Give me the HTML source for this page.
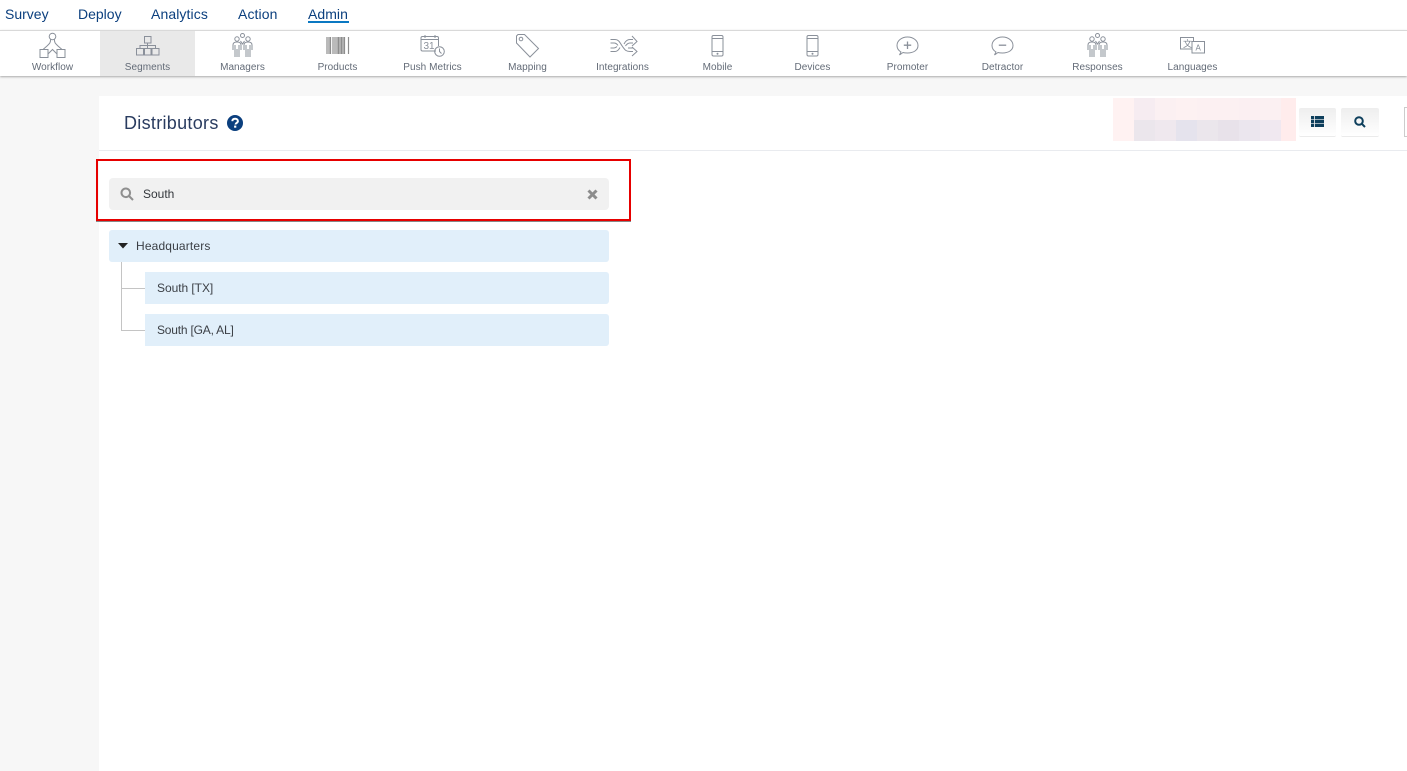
<!DOCTYPE html>
<html><head><meta charset="utf-8"><style>
html,body{margin:0;padding:0}
body{width:1407px;height:771px;position:relative;overflow:hidden;background:#f7f7f7;font-family:"Liberation Sans","Noto Sans CJK SC",sans-serif}
div,span,svg{position:absolute}
.top{top:6px;font-size:14px;line-height:16px;color:#0b3f7e;white-space:nowrap}
.lb{top:61px;width:95px;text-align:center;font-size:10px;line-height:12px;color:#636b77;white-space:nowrap;letter-spacing:.05px;padding-top:0.5px}
svg.i{top:31px;width:95px;height:30px;fill:none;stroke:#8a909a;stroke-width:1}
.t{font-size:12px;line-height:14px;color:#3b3f45;white-space:nowrap}
.b{background:#e1effa}
.c{top:98px;width:21px;height:21.5px}
.d{top:119.500px;width:21px;height:21.5px}
</style></head><body>
<div style="left:0;top:0;width:1407px;height:30px;background:#fff"></div>
<div class="top" style="left:5px">Survey</div>
<div class="top" style="left:78px">Deploy</div>
<div class="top" style="left:151px;letter-spacing:.1px">Analytics</div>
<div class="top" style="left:238px;letter-spacing:.1px">Action</div>
<div class="top" style="left:308px;letter-spacing:.05px">Admin</div>
<div style="left:308px;top:21px;width:41px;height:2px;background:#0a78c2"></div>
<div style="left:0;top:30px;width:1407px;height:46px;background:#fff;border-top:1px solid #d9d9d9;box-sizing:border-box;box-shadow:0 1px 2px #aaa"></div>
<div style="left:100px;top:31px;width:95px;height:45px;background:#e9e9e9"></div>

<svg class="i" style="left:5px" viewBox="0 0 95 30"><circle cx="47.500" cy="5.500" r="3.300"/><path d="M45.500 8.500C45.800 12 44 13 42 15L38 18.500M49.500 8.500C49.200 12 51 13 53 15L57 18.500M43 23L47.500 18.500 52 23"/><path d="M35 18.500H43V26.500H35ZM52 18.500H60V26.500H52Z"/></svg>
<svg class="i" style="left:100px" viewBox="0 0 95 30"><path d="M44.500 5.500H51V12H44.500ZM47.500 12V17M40 17V14.500H55.500V17M36.500 17.500H43.500V24H36.500ZM44.500 17.500H51V24H44.500ZM52 17.500H59V24H52Z"/></svg>
<svg class="i" style="left:195px" viewBox="0 0 95 30"><circle cx="47.500" cy="4.500" r="2"/><circle cx="42" cy="8" r="2.200"/><circle cx="53" cy="8" r="2.200"/><path d="M38 19V14C38 11.800 40 11 42 11S46 11.800 46 14V19M49 19V14C49 11.800 51 11 53 11S57 11.800 57 14V19M40 14V26M42 18V26M44 14V26M51 14V26M53 18V26M55 14V26M45.500 10L47.500 13 49.500 10"/></svg>
<svg class="i" style="left:290px;stroke:#8d8d8d" viewBox="0 0 95 30"><path stroke-width="1.200" d="M37 6V23M39 6V23M40.500 6V23M43 6V23M45 6V23M47 6V23M48.500 6V23M50 6V23M51.500 6V23M53 6V23M54.500 6V23M58.500 6V23"/></svg>
<svg class="i" style="left:385px" viewBox="0 0 95 30"><path d="M51 20H37.500C36.500 20 36 19.500 36 18.500V7C36 6 36.500 5.500 37.500 5.500H52C53 5.500 53.500 6 53.500 7V15M36 8.500H53.500M40 4V7M50 4V7"/><circle cx="54.500" cy="20.500" r="4.800"/><path d="M54.500 17.500V20.500L56.500 22.500"/><text x="38.500" y="18" font-size="10" font-family="Liberation Sans" fill="#8a909a" stroke="none">31</text></svg>
<svg class="i" style="left:480px" viewBox="0 0 95 30"><path d="M38 3.500H44.500L58.500 17.500 50 26 36.500 12 36.500 5Z"/><circle cx="41" cy="8" r="1.800"/></svg>
<svg class="i" style="left:575px" viewBox="0 0 95 30"><path d="M35.500 8.500H40C44 8.500 45 12 47.500 15.500S51 20.500 55 20.500H58M35.500 20.500H40C43 20.500 44 18 45 16.500M35.500 12H39C41 12 42 13 43 14.500M35.500 17H39C40 17 41 16.500 42 15.500M49 13C50 11 52 8.500 55 8.500H58M50.500 15C51.500 13.500 53 12 55 12H58M53 17H58M57 5L62 10.500 57 15M57 16L62 20.500 57 25"/></svg>
<svg class="i" style="left:670px" viewBox="0 0 95 30"><rect x="42" y="4.500" width="11" height="20.500" rx="1.500"/><path d="M42 7.500H53M42 20.500H53"/><circle cx="47.500" cy="22.700" r=".5"/></svg>
<svg class="i" style="left:765px" viewBox="0 0 95 30"><rect x="42" y="4.500" width="11" height="20.500" rx="1.500"/><path d="M42 7.500H53M42 20.500H53"/><circle cx="47.500" cy="22.700" r=".5"/></svg>
<svg class="i" style="left:860px" viewBox="0 0 95 30"><path d="M41 21C38.500 19.500 37 17 37 14.500C37 9.800 41.500 6 47.500 6S58 9.800 58 14.500 53.500 22 47.500 22C46 22 44.500 22 43 21.500L39.500 24Z"/><path stroke-width="1.300" d="M47.500 10.500V18M43.800 14.200H51.200"/></svg>
<svg class="i" style="left:955px" viewBox="0 0 95 30"><path d="M41 21C38.500 19.500 37 17 37 14.500C37 9.800 41.500 6 47.500 6S58 9.800 58 14.500 53.500 22 47.500 22C46 22 44.500 22 43 21.500L39.500 24Z"/><path stroke-width="1.300" d="M43.800 14.200H51.200"/></svg>
<svg class="i" style="left:1050px" viewBox="0 0 95 30"><circle cx="47.500" cy="4.500" r="2"/><circle cx="42" cy="8" r="2.200"/><circle cx="53" cy="8" r="2.200"/><path d="M38 19V14C38 11.800 40 11 42 11S46 11.800 46 14V19M49 19V14C49 11.800 51 11 53 11S57 11.800 57 14V19M40 14V26M42 18V26M44 14V26M51 14V26M53 18V26M55 14V26M45.500 10L47.500 13 49.500 10"/></svg>
<svg class="i" style="left:1145px" viewBox="0 0 95 30"><path d="M47 18H35.500V6.500H48.500V10.500M47 10.500H59.500V22H47Z"/><text x="38" y="16" font-size="9" fill="#7d8590" stroke="none" font-family="Noto Sans CJK SC">文</text><text x="50.500" y="19.500" font-size="8" fill="#7d8590" stroke="none" font-family="Liberation Sans">A</text></svg>

<div class="lb" style="left:5px">Workflow</div>
<div class="lb" style="left:100px">Segments</div>
<div class="lb" style="left:195px">Managers</div>
<div class="lb" style="left:290px">Products</div>
<div class="lb" style="left:385px">Push Metrics</div>
<div class="lb" style="left:480px">Mapping</div>
<div class="lb" style="left:575px">Integrations</div>
<div class="lb" style="left:670px">Mobile</div>
<div class="lb" style="left:765px">Devices</div>
<div class="lb" style="left:860px">Promoter</div>
<div class="lb" style="left:955px">Detractor</div>
<div class="lb" style="left:1050px">Responses</div>
<div class="lb" style="left:1145px">Languages</div>

<div style="left:99px;top:96px;width:1308px;height:675px;background:#fff"></div>
<div style="left:99px;top:150px;width:1308px;height:1px;background:#e9ebef"></div>
<div style="left:124px;top:112px;font-size:18px;line-height:22px;color:#2a3c60;letter-spacing:.3px;white-space:nowrap">Distributors</div>
<svg style="left:227px;top:115px" width="16" height="16" viewBox="0 0 16 16"><circle cx="8" cy="8" r="8" fill="#0b3f7e"/><path d="M5.300 6.200C5.400 4.600 6.600 3.800 8.100 3.800 9.700 3.800 10.900 4.700 10.900 6.100 10.900 8 8.500 7.900 8.500 9.500" fill="none" stroke="#fff" stroke-width="2"/><rect x="7.100" y="10.600" width="2.200" height="2.100" fill="#fff"/></svg>

<div style="left:1113px;top:98px;width:183px;height:43px;background:#fff2f2"></div>
<div class="c" style="left:1134px;background:#f6ecf1"></div>
<div class="c" style="left:1155px;background:#fbf0f2"></div>
<div class="c" style="left:1176px;background:#fdf1f2"></div>
<div class="c" style="left:1197px;background:#fcf0f2"></div>
<div class="c" style="left:1218px;background:#fcf0f2"></div>
<div class="c" style="left:1239px;background:#fbeff2"></div>
<div class="c" style="left:1260px;background:#fbf0f2"></div>
<div class="d" style="left:1134px;background:#ebe6ec"></div>
<div class="d" style="left:1155px;background:#efe8ee"></div>
<div class="d" style="left:1176px;background:#e5e3ed"></div>
<div class="d" style="left:1197px;background:#ebe6ec"></div>
<div class="d" style="left:1218px;background:#e8e2ea"></div>
<div class="d" style="left:1239px;background:#ebe6ee"></div>
<div class="d" style="left:1260px;background:#f0e8f0"></div>
<div style="left:1281px;top:98px;width:15px;height:43px;background:#ffecec"></div>

<div style="left:1299px;top:108px;width:37px;height:28px;background:linear-gradient(#eee,#fff);border-bottom:1px solid #ebebeb;border-radius:2px"></div>
<svg style="left:1311px;top:116px" width="13" height="11" viewBox="0 0 13 11" fill="#0e3f5c"><path d="M0 0H3V3.200H0ZM3.800 0H13V3.200H3.800ZM0 3.900H3V7.100H0ZM3.800 3.900H13V7.100H3.800ZM0 7.800H3V11H0ZM3.800 7.800H13V11H3.800Z"/></svg>
<div style="left:1341px;top:108px;width:38px;height:28px;background:linear-gradient(#eee,#fff);border-bottom:1px solid #ebebeb;border-radius:2px"></div>
<svg style="left:1354px;top:116px" width="12" height="12" viewBox="0 0 12 12" fill="none" stroke="#0e3f5c" stroke-width="2"><circle cx="5" cy="5" r="3.800"/><path d="M7.700 7.700L11 11"/></svg>
<div style="left:1404px;top:107px;width:3px;height:30px;box-sizing:border-box;border:1px solid #ccc;border-right:0"></div>

<div style="left:96px;top:159px;width:535px;height:62px;box-sizing:border-box;border:2px solid #e60000;box-shadow:0 1px 0 #888"></div>
<div style="left:109px;top:178px;width:500px;height:32px;background:#f1f1f1;border-radius:4px"></div>
<svg style="left:120px;top:187px" width="14" height="14" viewBox="0 0 14 14" fill="none" stroke="#8f8f8f" stroke-width="2"><circle cx="5.800" cy="5.800" r="4.300"/><path d="M9 9L13 13"/></svg>
<div class="t" style="left:143px;top:187px;color:#33373c">South</div>
<svg style="left:587px;top:189px" width="11" height="11" viewBox="0 0 11 11" stroke="#8c8c8c" stroke-width="3"><path d="M1.500 1.500L9.500 9.500M9.500 1.500L1.500 9.500"/></svg>

<div class="b" style="left:109px;top:230px;width:500px;height:32px;border-radius:3px"></div>
<svg style="left:118px;top:243px" width="10" height="6" viewBox="0 0 10 6" fill="#222"><path d="M0 0H10L5 5.500Z"/></svg>
<div class="t" style="left:136px;top:239px;letter-spacing:.15px">Headquarters</div>
<div style="left:121px;top:262px;width:1px;height:68px;background:#c4c4c4"></div>
<div style="left:121px;top:288px;width:24px;height:1px;background:#c4c4c4"></div>
<div style="left:121px;top:330px;width:24px;height:1px;background:#c4c4c4"></div>
<div class="b" style="left:145px;top:272px;width:464px;height:32px;border-radius:0 3px 3px 0"></div>
<div class="t" style="left:157px;top:281px;letter-spacing:-.05px">South [TX]</div>
<div class="b" style="left:145px;top:314px;width:464px;height:32px;border-radius:0 3px 3px 0"></div>
<div class="t" style="left:157px;top:323px;letter-spacing:-.2px">South [GA, AL]</div>
</body></html>
